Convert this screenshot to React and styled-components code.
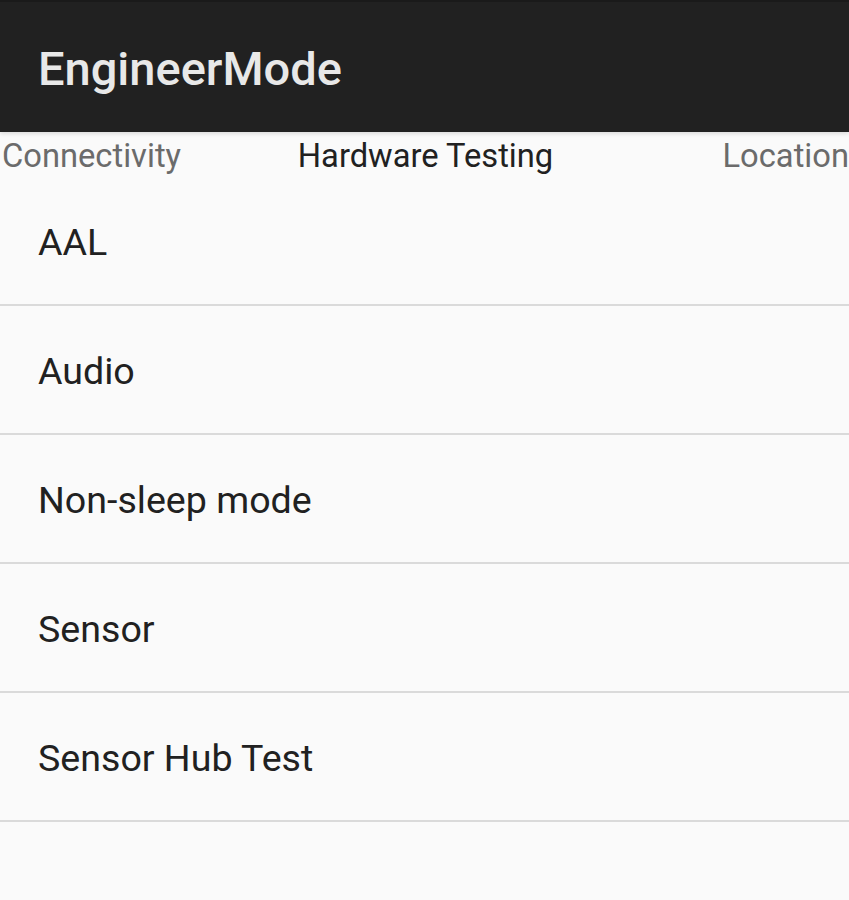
import styled, { createGlobalStyle } from "styled-components";

const GlobalStyle = createGlobalStyle`
  html, body {
    margin: 0;
    padding: 0;
    background: #fafafa;
  }
  body {
    font-family: Roboto, "Noto Sans", "Liberation Sans", sans-serif;
  }
`;

const Screen = styled.div`
  width: 849px;
  height: 900px;
  overflow: hidden;
  background: #fafafa;
  display: flex;
  flex-direction: column;
`;

const ActionBar = styled.header`
  height: 132px;
  flex-shrink: 0;
  background: #212121;
  border-top: 2px solid #1a1a1a;
  box-sizing: border-box;
  display: flex;
  align-items: center;
  padding: 2px 38px 0;
  box-shadow: 0 2px 4px rgba(0, 0, 0, 0.12);
  position: relative;
  z-index: 1;
`;

const Title = styled.h1`
  margin: 0;
  color: #e8e8e8;
  font-size: 47px;
  font-weight: 500;
`;

// prev title at the left edge, current one centred, next one at the right edge
const TitleStrip = styled.nav`
  height: 45px;
  flex-shrink: 0;
  display: grid;
  grid-template-columns: 1fr auto 1fr;
  align-items: center;
  padding: 4px 0 0 2px;
  box-sizing: border-box;
  white-space: nowrap;
`;

const TabLabel = styled.span`
  font-size: 32.7px;
  line-height: 1;
  color: ${(p) => (p.$active ? "#212121" : "#6b6b6b")};
  justify-self: ${(p) => p.$align || "center"};
`;

const List = styled.ul`
  list-style: none;
  margin: 0;
  padding: 0;
`;

const Item = styled.li`
  height: 129px;
  box-sizing: border-box;
  display: flex;
  align-items: center;
  padding: 3px 38px 0;
  border-bottom: 2px solid #dadada;
  font-size: 37.6px;
  color: #212121;
`;

const items = ["AAL", "Audio", "Non-sleep mode", "Sensor", "Sensor Hub Test"];

export default function App() {
  return (
    <Screen>
      <GlobalStyle />
      <ActionBar>
        <Title>EngineerMode</Title>
      </ActionBar>
      <TitleStrip>
        <TabLabel $align="start">Connectivity</TabLabel>
        <TabLabel $active>Hardware Testing</TabLabel>
        <TabLabel $align="end">Location</TabLabel>
      </TitleStrip>
      <List>
        {items.map((name) => (
          <Item key={name}>{name}</Item>
        ))}
      </List>
    </Screen>
  );
}
